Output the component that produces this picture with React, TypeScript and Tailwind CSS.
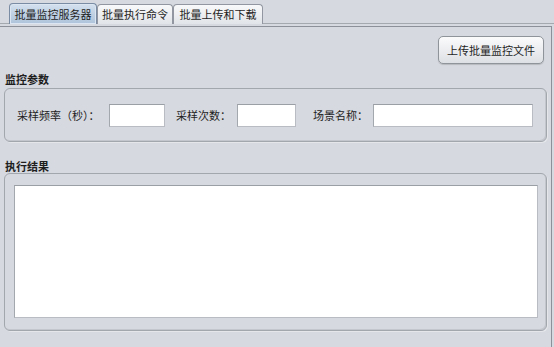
import React from "react";

const font = { fontFamily: '"Noto Sans CJK SC", "Noto Sans", sans-serif' };

function Tab({ label, w, active }: { label: string; w: string; active?: boolean }) {
  return (
    <div
      className={
        w +
        " flex items-center justify-center whitespace-nowrap border border-b-0 rounded-t-[4px] text-[11px] leading-none text-[#1e1e1e] " +
        (active
          ? "h-[21px] bg-gradient-to-b from-[#d3e0ee] to-[#aec3da] border-[#7a8ca4] shadow-[inset_0_0_0_1px_#dbe6f2]"
          : "h-[20px] bg-gradient-to-b from-[#f8f9fa] to-[#e1e4e8] border-[#9196a0]")
      }
    >
      {label}
    </div>
  );
}

function Input({ w }: { w: string }) {
  return (
    <div
      className={
        w +
        " h-[23px] bg-white border border-[#b9bcc2] border-t-[#9a9ea5] border-l-[#a3a7ae]"
      }
    />
  );
}

export default function App() {
  return (
    <div
      className="w-[554px] h-[347px] bg-[#d6d9df] overflow-hidden flex flex-col text-[#1e1e1e]"
      style={font}
    >
      {/* tab strip */}
      <div className="h-[24px] flex items-end border-b border-[#a4a8af] pl-[9px] shrink-0">
        <div className="flex items-end -mb-px">
          <Tab label="批量监控服务器" w="w-[88px]" active />
          <Tab label="批量执行命令" w="w-[76px]" />
          <Tab label="批量上传和下载" w="w-[90px]" />
        </div>
      </div>

      {/* panel */}
      <div className="mt-[2px] mr-[2px] flex-1 border-t border-r border-[#8c9098] flex flex-col">
        <div className="flex justify-end pr-[7px] mt-[9px]">
          <button className="w-[106px] h-[28px] rounded-[5px] border border-[#8f949b] bg-gradient-to-b from-[#fbfbfc] to-[#dde0e4] shadow-[0_1px_1px_rgba(0,0,0,0.15)] text-[11px] leading-none text-[#1e1e1e]">
            上传批量监控文件
          </button>
        </div>

        <div className="mt-[8px] h-[14px] pl-[5px] text-[11px] leading-[14px] font-bold">
          监控参数
        </div>

        <div className="mt-[2px] ml-[4px] w-[543px] h-[54px] rounded-[6px] border border-[#a2a6ad] shadow-[inset_-1px_-1px_0_#c3c6cc,1px_1px_0_#e4e6ea] flex items-center pl-[12px] text-[11px] leading-none">
          <span className="w-[92px]">采样频率（秒）：</span>
          <Input w="w-[56px]" />
          <span className="ml-[11px] w-[61px]">采样次数：</span>
          <Input w="w-[59px]" />
          <span className="ml-[17px] w-[60px]">场景名称：</span>
          <Input w="w-[160px]" />
        </div>

        <div className="mt-[17px] h-[14px] pl-[5px] text-[11px] leading-[14px] font-bold">
          执行结果
        </div>

        <div className="ml-[4px] w-[543px] h-[158px] rounded-[6px] border border-[#a2a6ad] shadow-[inset_-1px_-1px_0_#c3c6cc,1px_1px_0_#e4e6ea] pl-[9px] pt-[11px]">
          <div className="w-[524px] h-[133px] bg-white border border-[#b9bcc2] border-t-[#9a9ea5] border-l-[#a3a7ae]" />
        </div>
      </div>
    </div>
  );
}
